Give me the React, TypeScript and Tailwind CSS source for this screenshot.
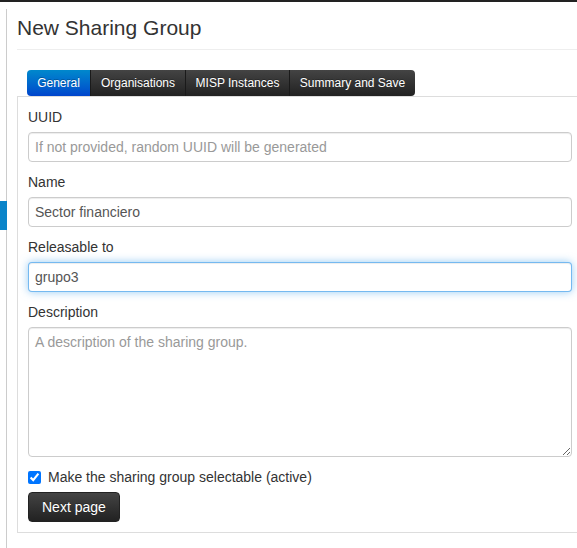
import React from "react";

export default function App() {
  const font = "font-['Liberation_Sans',Arial,sans-serif]";
  const inputBase =
    "block w-full h-[30px] px-[6px] text-[14px] leading-5 text-[#555] bg-white border border-[#ccc] rounded-[4px] outline-none placeholder:text-[#999] shadow-[inset_0_1px_1px_rgba(0,0,0,0.075)]";
  return (
    <div className={`w-[577px] h-[548px] overflow-hidden bg-white text-[#333] ${font}`}>
      <div className="h-[2px] bg-[#222]" />
      <div className="flex">
        <div className="w-[7px] shrink-0 mt-[7px] h-[600px] border-r border-[#ccc]">
          <div className="mt-[192px] w-[7px] h-[29px] bg-[#0a84c9]" />
        </div>
        <div className="w-[576px] shrink-0 pl-[10px] pt-[14px]">
          <h2 className="text-[21px] leading-6 font-normal text-[#333] pb-[9px] border-b border-[#eee]">
            New Sharing Group
          </h2>
          <div className="mt-[20px] ml-[10px] flex w-fit rounded-t-[4px] rounded-b-[4px] overflow-hidden text-[12px] text-white">
            <div className="w-[63px] h-[26px] flex items-center justify-center bg-linear-to-b from-[#0088cc] to-[#0044cc] [text-shadow:0_-1px_0_rgba(0,0,0,0.25)]">
              General
            </div>
            <div className="w-[95px] h-[26px] flex items-center justify-center bg-linear-to-b from-[#444] to-[#222] border-l border-[#1a1a1a] [text-shadow:0_-1px_0_rgba(0,0,0,0.25)]">
              Organisations
            </div>
            <div className="w-[104px] h-[26px] flex items-center justify-center bg-linear-to-b from-[#444] to-[#222] border-l border-[#1a1a1a] [text-shadow:0_-1px_0_rgba(0,0,0,0.25)]">
              MISP Instances
            </div>
            <div className="w-[126px] h-[26px] flex items-center justify-center bg-linear-to-b from-[#444] to-[#222] border-l border-[#1a1a1a] [text-shadow:0_-1px_0_rgba(0,0,0,0.25)]">
              Summary and Save
            </div>
          </div>
          <div className="border border-[#ddd] p-[10px] text-[14px] leading-5">
            <label className="block mb-[5px]">UUID</label>
            <input
              className={`${inputBase} mb-[10px] ${font}`}
              placeholder="If not provided, random UUID will be generated"
            />
            <label className="block mb-[5px]">Name</label>
            <input
              className={`${inputBase} mb-[10px] ${font}`}
              defaultValue="Sector financiero"
            />
            <label className="block mb-[5px]">Releasable to</label>
            <input
              className={`block w-full h-[30px] px-[6px] text-[14px] leading-5 text-[#555] bg-white border border-[rgba(82,168,236,0.8)] rounded-[4px] outline-none shadow-[inset_0_1px_1px_rgba(0,0,0,0.075),0_0_8px_rgba(82,168,236,0.6)] mb-[10px] ${font}`}
              defaultValue="grupo3"
            />
            <label className="block mb-[5px]">Description</label>
            <textarea
              className={`block w-full h-[130px] px-[6px] py-[4px] text-[14px] leading-5 text-[#555] bg-white border border-[#ccc] rounded-[4px] outline-none placeholder:text-[#999] shadow-[inset_0_1px_1px_rgba(0,0,0,0.075)] mb-[10px] ${font}`}
              placeholder="A description of the sharing group."
            />
            <div className="flex items-center h-5 mb-[5px]">
              <input type="checkbox" defaultChecked className="w-[13px] h-[13px] accent-[#0075ff]" />
              <span className="ml-[7px]">Make the sharing group selectable (active)</span>
            </div>
            <button className="h-[30px] px-[13px] rounded-[4px] text-white text-[14px] bg-linear-to-b from-[#444] to-[#222] border border-[#222] [text-shadow:0_-1px_0_rgba(0,0,0,0.25)]">
              Next page
            </button>
          </div>
        </div>
      </div>
    </div>
  );
}
